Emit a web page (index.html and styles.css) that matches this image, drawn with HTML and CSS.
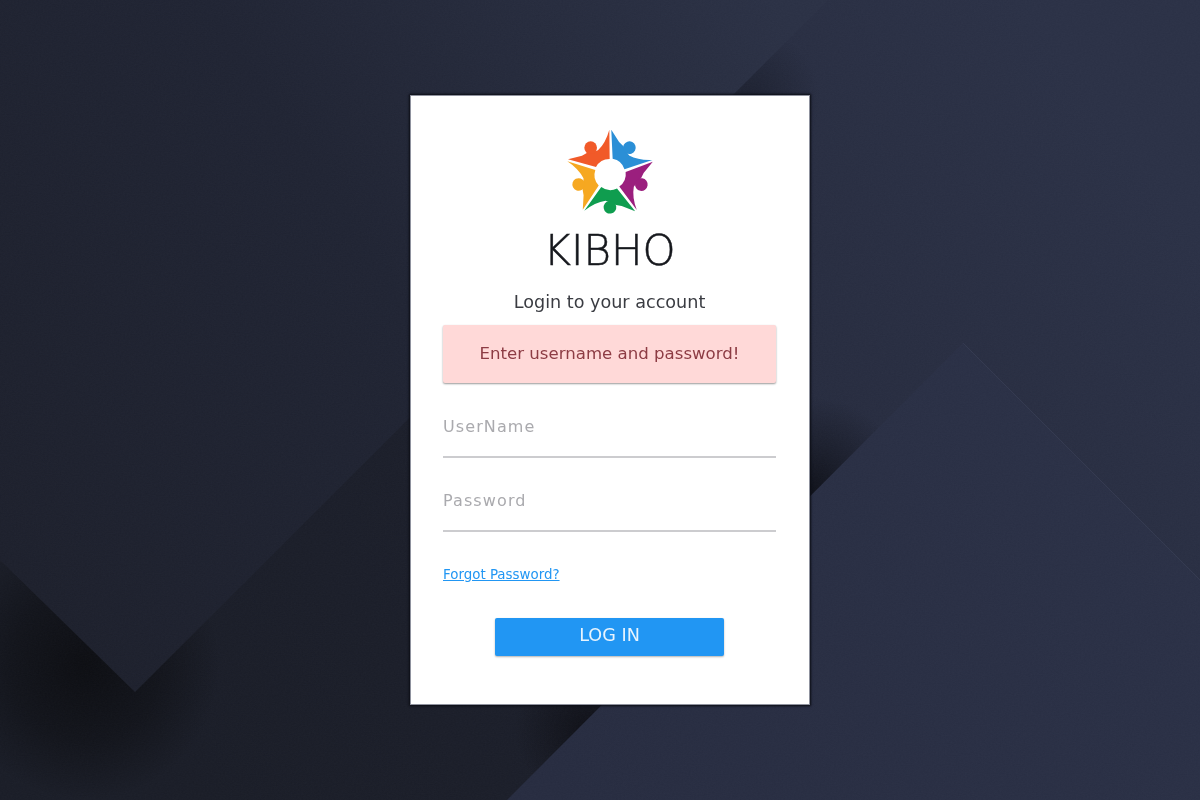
FILE: index.html
```html
<!DOCTYPE html>
<html lang="en">
<head>
<meta charset="utf-8">
<title>KIBHO Login</title>
<link rel="stylesheet" href="styles.css">
</head>
<body>
<svg class="backdrop" viewBox="0 0 1200 800" preserveAspectRatio="none" aria-hidden="true">
  <defs>
    <linearGradient id="base" gradientUnits="userSpaceOnUse" x1="200" y1="800" x2="1100" y2="100">
      <stop offset="0" stop-color="#191c26"/>
      <stop offset="0.42" stop-color="#1b1e2a"/>
      <stop offset="0.62" stop-color="#262b3e"/>
      <stop offset="1" stop-color="#2a3045"/>
    </linearGradient>
    <linearGradient id="sheetA" gradientUnits="userSpaceOnUse" x1="0" y1="560" x2="800" y2="40">
      <stop offset="0" stop-color="#1c1f2b"/>
      <stop offset="0.5" stop-color="#1f2332"/>
      <stop offset="1" stop-color="#2a3044"/>
    </linearGradient>
    <linearGradient id="sheetB" gradientUnits="userSpaceOnUse" x1="560" y1="800" x2="1200" y2="400">
      <stop offset="0" stop-color="#262b3f"/>
      <stop offset="1" stop-color="#2a3046"/>
    </linearGradient>
    <radialGradient id="shadeApex" gradientUnits="userSpaceOnUse" cx="85" cy="665" r="135">
      <stop offset="0" stop-color="#0b0c10" stop-opacity="0.95"/>
      <stop offset="0.55" stop-color="#0b0c10" stop-opacity="0.55"/>
      <stop offset="1" stop-color="#0b0c10" stop-opacity="0"/>
    </radialGradient>
    <radialGradient id="shadeTop" gradientUnits="userSpaceOnUse" cx="745" cy="100" r="75">
      <stop offset="0" stop-color="#1a1e2c" stop-opacity="0.85"/>
      <stop offset="1" stop-color="#1a1e2c" stop-opacity="0"/>
    </radialGradient>
    <radialGradient id="shadeRight" gradientUnits="userSpaceOnUse" cx="812" cy="492" r="95">
      <stop offset="0" stop-color="#0e1018" stop-opacity="0.95"/>
      <stop offset="0.5" stop-color="#0e1018" stop-opacity="0.45"/>
      <stop offset="1" stop-color="#0e1018" stop-opacity="0"/>
    </radialGradient>
    <radialGradient id="shadeBottom" gradientUnits="userSpaceOnUse" cx="590" cy="730" r="75">
      <stop offset="0" stop-color="#0d0e14" stop-opacity="0.9"/>
      <stop offset="1" stop-color="#0d0e14" stop-opacity="0"/>
    </radialGradient>
    <filter id="grain" x="0" y="0" width="100%" height="100%">
      <feTurbulence type="fractalNoise" baseFrequency="0.55 0.9" numOctaves="2" seed="4"/>
      <feColorMatrix values="0 0 0 0 0.5  0 0 0 0 0.55  0 0 0 0 0.7  0 0 0 0.035 0"/>
    </filter>
  </defs>
  <rect width="1200" height="800" fill="url(#base)"/>
  <circle cx="85" cy="665" r="135" fill="url(#shadeApex)"/>
  <circle cx="745" cy="100" r="75" fill="url(#shadeTop)"/>
  <polygon points="0,0 828,0 135,692 0,560" fill="url(#sheetA)"/>
  <circle cx="812" cy="492" r="95" fill="url(#shadeRight)"/>
  <circle cx="590" cy="730" r="75" fill="url(#shadeBottom)"/>
  <polygon points="963,343 1200,580 1200,800 507,800" fill="url(#sheetB)"/>
  <polyline points="963,343 1200,580" fill="none" stroke="#32384e" stroke-width="1"/>
  <rect width="1200" height="800" filter="url(#grain)"/>
</svg>

<main class="stage">
  <form class="card">
    <svg class="logo" viewBox="0 0 420 330" role="img" aria-label="Kibho logo">
      <defs>
        <g id="figure">
          <path d="M208 44 L209 132 A46 46 0 0 0 168 156 L84 133 L126 122 Q140 112 155 112 L174 106 Q197 84 208 44 Z"/>
          <circle cx="152" cy="98" r="19"/>
        </g>
      </defs>
      <use href="#figure" fill="#f15a29"/>
      <use href="#figure" fill="#2b8fd6" transform="rotate(72 210 178)"/>
      <use href="#figure" fill="#9b1f7e" transform="rotate(144 210 178)"/>
      <use href="#figure" fill="#0f9d4f" transform="rotate(216 210 178)"/>
      <use href="#figure" fill="#f6a821" transform="rotate(288 210 178)"/>
    </svg>
    <h1 class="brand">KIBHO</h1>
    <p class="subtitle">Login to your account</p>
    <div class="alert">Enter username and password!</div>
    <input class="field" type="text" placeholder="UserName">
    <input class="field" type="password" placeholder="Password">
    <a class="forgot" href="#">Forgot Password?</a>
    <button class="submit" type="button">LOG IN</button>
  </form>
</main>
</body>
</html>
```
FILE: styles.css
```css
* { box-sizing: border-box; }
html, body { height: 100%; margin: 0; }
body {
  background: #1e2230;
  font-family: "DejaVu Sans", sans-serif;
  overflow: hidden;
}
.backdrop {
  position: absolute;
  inset: 0;
  width: 100%;
  height: 100%;
  display: block;
}
.stage {
  position: relative;
  height: 100%;
  padding-left: 20px;
  display: flex;
  align-items: center;
  justify-content: center;
}
.card {
  width: 400px;
  height: 610px;
  padding: 19px 33px 0 32px;
  background: #fff;
  border: 1px solid #8f929e;
  box-shadow: 0 0 2px 1px #0b0d14;
  display: flex;
  flex-direction: column;
  filter: blur(0.45px);
}
.logo {
  width: 140px;
  height: 110px;
  align-self: center;
  display: block;
}
.brand {
  margin: 1px 0 0;
  font-size: 42px;
  line-height: 50px;
  font-weight: 200;
  color: #16181d;
  text-align: center;
  -webkit-text-stroke: 0.5px #16181d;
}
.subtitle {
  margin: 14px 0 0;
  font-size: 17.6px;
  line-height: 24px;
  color: #3a3c42;
  text-align: center;
}
.alert {
  margin-top: 11px;
  height: 58px;
  padding-bottom: 2px;
  display: flex;
  align-items: center;
  justify-content: center;
  background: #ffd9d8;
  color: #8d3c44;
  font-size: 16.6px;
  border-radius: 2px;
  box-shadow: 0 1px 2px rgba(0, 0, 0, 0.4);
}
.field {
  display: block;
  width: 100%;
  height: 50px;
  margin-top: 24px;
  padding: 0 0 11px;
  border: 0;
  border-bottom: 2px solid #cccccf;
  background: none;
  outline: 0;
  font: 16px "DejaVu Sans", sans-serif;
  letter-spacing: 1.1px;
}
.field:first-of-type { margin-top: 25px; }
.field::placeholder { color: #aaaaae; opacity: 1; }
.forgot {
  align-self: flex-start;
  margin-top: 35px;
  font-size: 13.4px;
  line-height: 16px;
  color: #2196f3;
  text-decoration: underline;
}
.submit {
  align-self: center;
  width: 229px;
  height: 38px;
  margin-top: 35px;
  padding: 0 0 4px;
  border: 0;
  border-radius: 2px;
  background: #2196f3;
  color: #e8f4fe;
  font: 17.6px "DejaVu Sans", sans-serif;
  box-shadow: 0 1px 2px rgba(0, 0, 0, 0.3);
}
```
